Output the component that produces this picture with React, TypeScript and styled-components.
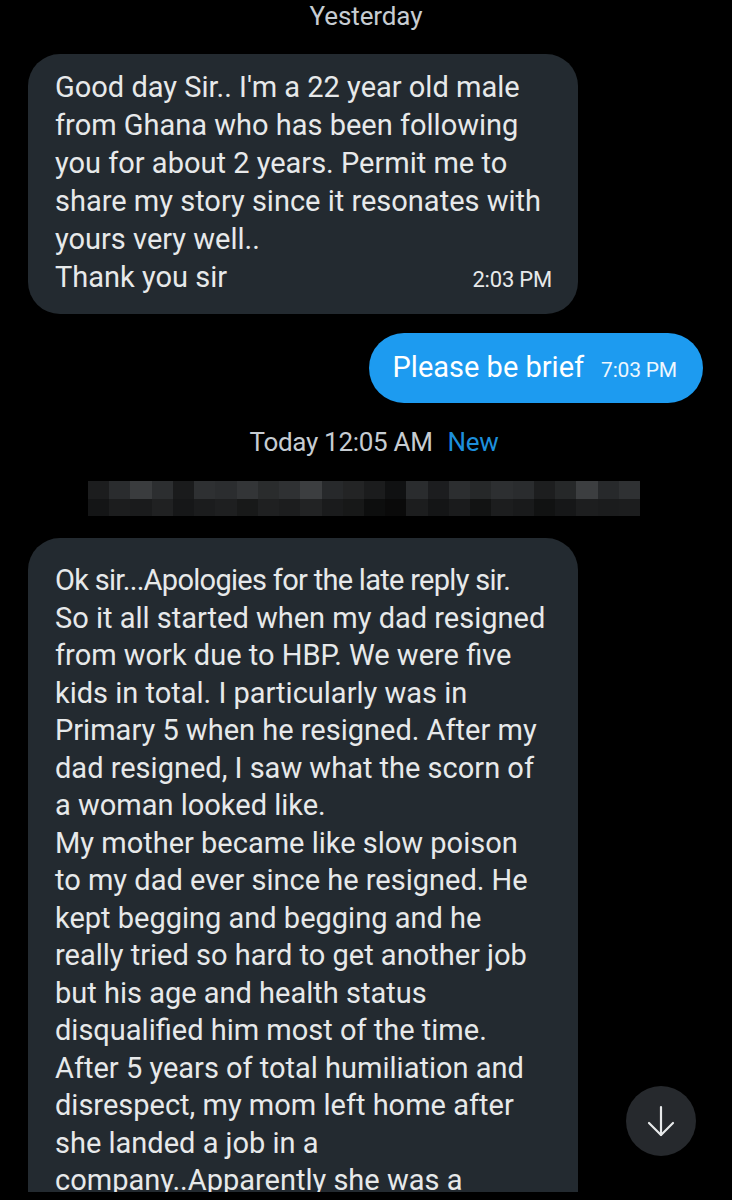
import React from "react";
import styled, { createGlobalStyle } from "styled-components";

const Global = createGlobalStyle`
  html, body { margin: 0; padding: 0; background: #000; }
  body { font-family: Roboto, "Noto Sans", sans-serif; color: #e7e9ea; }
`;

const Screen = styled.div`
  position: relative;
  width: 732px;
  height: 1192px;
  overflow: hidden;
  background: #000;
  display: flex;
  flex-direction: column;
  padding-top: 1px;
  box-sizing: border-box;
`;

const DateLabel = styled.div`
  text-align: center;
  font-size: 26px;
  line-height: 30px;
  color: #c6ccd2;
  letter-spacing: -0.1px;
`;

const Row = styled.div<{ $mine?: boolean; $top: number }>`
  display: flex;
  justify-content: ${(p) => (p.$mine ? "flex-end" : "flex-start")};
  padding: 0 ${(p) => (p.$mine ? "29px" : "0")} 0 ${(p) => (p.$mine ? "0" : "28px")};
  margin-top: ${(p) => p.$top}px;
`;

const Bubble = styled.div<{ $mine?: boolean }>`
  box-sizing: border-box;
  background: ${(p) => (p.$mine ? "#1d9bf0" : "#232a30")};
  border-radius: ${(p) => (p.$mine ? "35px" : "32px")};
  color: ${(p) => (p.$mine ? "#ffffff" : "#e7e9ea")};
  font-size: 29px;
  line-height: 38px;
  letter-spacing: 0;
`;

const Received = styled(Bubble)`
  width: 550px;
  padding: 14px 26px 15px 27px;
  white-space: pre-line;
`;

const LastLine = styled.div`
  display: flex;
  justify-content: space-between;
  align-items: baseline;
`;

const Time = styled.span<{ $mine?: boolean }>`
  font-size: ${(p) => (p.$mine ? "21px" : "22px")};
  letter-spacing: -0.2px;
  color: ${(p) => (p.$mine ? "#eef7fe" : "#e7e9ea")};
`;

const Sent = styled(Bubble)`
  display: flex;
  align-items: baseline;
  gap: 17px;
  padding: 15px 26px 15px 24px;
  height: 70px;
`;

const TodayRow = styled.div`
  display: flex;
  justify-content: center;
  gap: 15px;
  margin-top: 24px;
  padding-left: 16px;
  font-size: 26px;
  line-height: 30px;
  letter-spacing: -0.3px;
  color: #c6ccd2;
`;

const NewTag = styled.span`
  color: #1d8fdc;
`;

const Blurred = styled.div`
  margin: 24px 0 0 88px;
  width: 552px;
  display: grid;
  grid-template-columns: repeat(26, 1fr);
  grid-auto-rows: 17.5px;
`;

const Pixel = styled.div<{ $shade: string }>`
  background: ${(p) => p.$shade};
`;

const LongBubble = styled(Received)`
  padding: 24px 26px 0 27px;
  border-radius: 32px 32px 0 0;
  height: 700px;
  line-height: 37.5px;
`;

const FirstLine = styled.span`
  letter-spacing: -0.7px;
`;

const ScrollButton = styled.button`
  position: absolute;
  left: 626px;
  top: 1086px;
  width: 70px;
  height: 70px;
  border-radius: 50%;
  border: none;
  background: #26292d;
  display: flex;
  align-items: center;
  justify-content: center;
  padding: 0;
`;

const topShades = [
  "#1c1d1e", "#2a2c2e", "#3a3c3e", "#2c2e30", "#1a1b1c", "#2e3032", "#2b2d2f", "#333537",
  "#2a2c2d", "#2f3133", "#3c3e40", "#27292b", "#232425", "#1b1c1d", "#101112", "#2a2c2e",
  "#1c1d1f", "#2c2e30", "#262829", "#2d2f31", "#2a2c2e", "#1d1e1f", "#262829", "#3c3e40",
  "#27292b", "#2f3133",
];
const bottomShades = [
  "#141516", "#1c1d1e", "#1a1b1c", "#202122", "#161718", "#1b1c1d", "#1e1f20", "#181919",
  "#1f2021", "#1c1d1e", "#222324", "#1a1b1c", "#171818", "#0d0e0e", "#0a0a0a", "#1c1d1e",
  "#141516", "#1a1b1c", "#121313", "#1c1d1e", "#191a1b", "#111212", "#161718", "#1d1e1f",
  "#1b1c1d", "#1c1d1e",
];

const firstText = `Good day Sir.. I'm a 22 year old male
from Ghana who has been following
you for about 2 years. Permit me to
share my story since it resonates with
yours very well..`;

const longText = `
So it all started when my dad resigned
from work due to HBP. We were five
kids in total. I particularly was in
Primary 5 when he resigned. After my
dad resigned, I saw what the scorn of
a woman looked like.
My mother became like slow poison
to my dad ever since he resigned. He
kept begging and begging and he
really tried so hard to get another job
but his age and health status
disqualified him most of the time.
After 5 years of total humiliation and
disrespect, my mom left home after
she landed a job in a
company..Apparently she was a`;

export default function App() {
  return (
    <>
      <Global />
      <Screen>
        <DateLabel>Yesterday</DateLabel>
        <Row $top={23}>
          <Received>
            {firstText}
            <LastLine>
              <span>Thank you sir</span>
              <Time>2:03 PM</Time>
            </LastLine>
          </Received>
        </Row>
        <Row $mine $top={19}>
          <Sent $mine>
            <span>Please be brief</span>
            <Time $mine>7:03 PM</Time>
          </Sent>
        </Row>
        <TodayRow>
          <span>Today 12:05 AM</span>
          <NewTag>New</NewTag>
        </TodayRow>
        <Blurred>
          {topShades.map((s, i) => (
            <Pixel key={"t" + i} $shade={s} />
          ))}
          {bottomShades.map((s, i) => (
            <Pixel key={"b" + i} $shade={s} />
          ))}
        </Blurred>
        <Row $top={22}>
          <LongBubble>
            <FirstLine>Ok sir...Apologies for the late reply sir.</FirstLine>
            {longText}
          </LongBubble>
        </Row>
        <ScrollButton aria-label="Scroll to bottom">
          <svg width="30" height="32" viewBox="0 0 30 32" fill="none" stroke="#e7e9ea" strokeWidth="2.2" strokeLinecap="round" strokeLinejoin="round">
            <path d="M15 2v28" />
            <path d="M3 18l12 12 12-12" />
          </svg>
        </ScrollButton>
      </Screen>
    </>
  );
}
